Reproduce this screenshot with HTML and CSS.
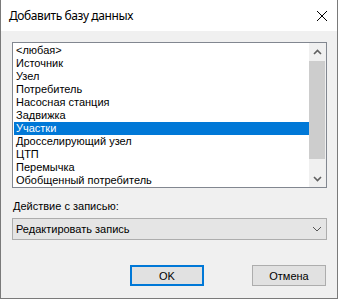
FILE: index.html
```html
<!DOCTYPE html>
<html lang="ru">
<head>
    <meta charset="UTF-8">
    <title>Добавить базу данных</title>
    <link rel="stylesheet" href="styles.css">
</head>
<body>
    <div class="dialog">
        <!-- Title bar -->
        <div class="titlebar">
            <span class="title">Добавить базу данных</span>
            <svg class="close" width="12" height="12" viewBox="0 0 12 12">
                <path d="M1 1 L11 11 M11 1 L1 11" stroke="#000" stroke-width="1" fill="none"/>
            </svg>
        </div>

        <div class="content">
            <!-- List of databases -->
            <div class="listbox">
                <ul class="items">
                    <li>&lt;любая&gt;</li>
                    <li>Источник</li>
                    <li>Узел</li>
                    <li>Потребитель</li>
                    <li>Насосная станция</li>
                    <li>Задвижка</li>
                    <li class="selected">Участки</li>
                    <li>Дросселирующий узел</li>
                    <li>ЦТП</li>
                    <li>Перемычка</li>
                    <li>Обобщенный потребитель</li>
                </ul>
                <div class="scrollbar">
                    <div class="arrow">
                        <svg width="9" height="6" viewBox="0 0 9 6"><path d="M1 5 L4.5 1.5 L8 5" stroke="#606060" stroke-width="1.6" fill="none"/></svg>
                    </div>
                    <div class="track"><div class="thumb"></div></div>
                    <div class="arrow">
                        <svg width="9" height="6" viewBox="0 0 9 6"><path d="M1 1 L4.5 4.5 L8 1" stroke="#606060" stroke-width="1.6" fill="none"/></svg>
                    </div>
                </div>
            </div>

            <label class="caption">Действие с записью:</label>
            <div class="combo">
                <span>Редактировать запись</span>
                <svg width="10" height="6" viewBox="0 0 10 6"><path d="M1 1 L5 5 L9 1" stroke="#555" stroke-width="1" fill="none"/></svg>
            </div>

            <div class="buttons">
                <button class="btn default">OK</button>
                <button class="btn">Отмена</button>
            </div>
        </div>
    </div>
</body>
</html>
```

FILE: styles.css
```css
* {
    box-sizing: border-box;
    margin: 0;
    padding: 0;
}
body {
    background-color: #f0f0f0;
    font-family: 'Liberation Sans', Arial, sans-serif;
    font-size: 11px;
    color: #000;
}
.dialog {
    width: 338px;
    height: 299px;
    border: 1px solid #7a7a7a;
    border-top: none;
    background-color: #f0f0f0;
}
.titlebar {
    height: 31px;
    background-color: #fff;
    display: flex;
    align-items: center;
    justify-content: space-between;
    padding: 0 9px 0 8px;
}
.title {
    font-family: 'Noto Sans', 'Open Sans', sans-serif;
    font-size: 12px;
    letter-spacing: -0.4px;
    padding-bottom: 1px;
}
.close {
    margin-top: 1px;
}
.content {
    padding: 11px 10px 0 11px;
}
.listbox {
    height: 146px;
    border: 1px solid #828790;
    background-color: #fff;
    display: flex;
    overflow: hidden;
}
.items {
    list-style: none;
    flex: 1;
    padding: 1px 0 0 1px;
}
.items li {
    height: 13px;
    line-height: 13px;
    padding-left: 2px;
    white-space: nowrap;
}
.items li.selected {
    background-color: #0078d7;
    color: #fff;
}
.scrollbar {
    width: 17px;
    background-color: #f0f0f0;
    display: flex;
    flex-direction: column;
}
.arrow {
    height: 17px;
    display: flex;
    align-items: center;
    justify-content: center;
}
.track {
    flex: 1;
    padding: 1px 1px 10px 0;
}
.thumb {
    height: 98px;
    background-color: #cdcdcd;
}
.caption {
    display: block;
    line-height: 13px;
    margin-top: 12px;
    padding-left: 1px;
}
.combo {
    margin-top: 5px;
    height: 22px;
    border: 1px solid #adadad;
    background-color: #e5e5e5;
    display: flex;
    align-items: center;
    justify-content: space-between;
    padding: 0 4px 0 3px;
}
.buttons {
    display: flex;
    justify-content: flex-end;
    gap: 48px;
    margin-top: 25px;
    padding-right: 1px;
}
.btn {
    width: 74px;
    height: 21px;
    font-family: 'Liberation Sans', Arial, sans-serif;
    font-size: 11px;
    background-color: #e1e1e1;
    border: 1px solid #adadad;
    color: #000;
}
.btn.default {
    border: 2px solid #0078d7;
}
```
